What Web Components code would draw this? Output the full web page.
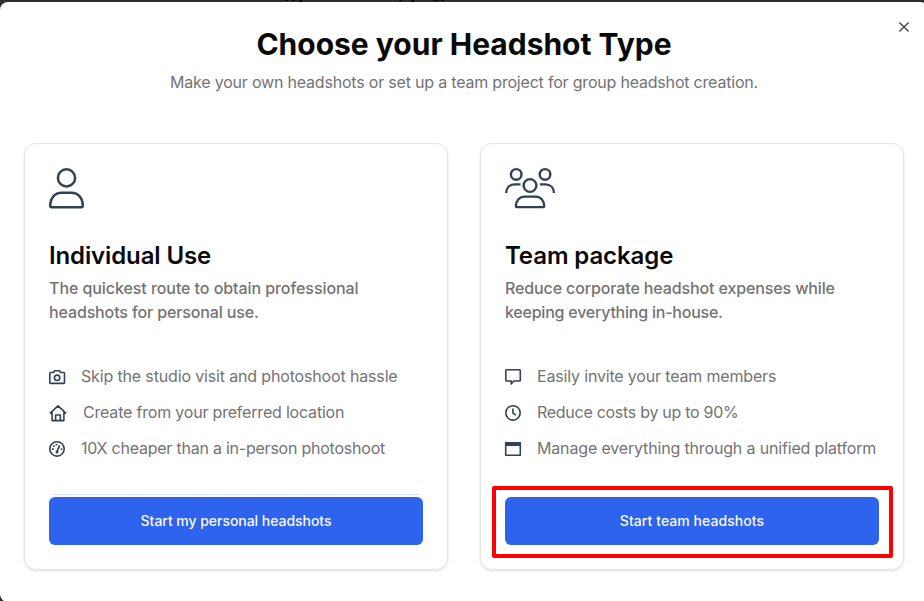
<!DOCTYPE html>
<html lang="en">
<head>
    <meta charset="utf-8">
    <title>Choose your Headshot Type</title>
    <style>
        body {
            margin: 0;
            height: 601px;
            overflow: hidden;
            background: #2f2d2f;
            font-family: Inter, "Liberation Sans", sans-serif;
            font-size: 16px;
            line-height: 24px;
            color: #0a0a0a;
        }
    </style>
</head>
<body>
    <page-backdrop></page-backdrop>
    <type-dialog>
        <span slot="title">Choose your Headshot Type</span>
        <span slot="subtitle">Make your own headshots or set up a team project for group headshot creation.</span>

        <option-card divider>
            <ui-icon slot="icon" name="person"></ui-icon>
            <span slot="heading" style="letter-spacing: -0.12px">Individual Use</span>
            <span slot="text" style="letter-spacing: -0.07px">The quickest route to obtain professional</span>
            <span slot="text" style="letter-spacing: -0.13px">headshots for personal use.</span>
            <feature-row icon="camera" style="letter-spacing: -0.155px">Skip the studio visit and photoshoot hassle</feature-row>
            <feature-row icon="home" style="letter-spacing: -0.195px">Create from your preferred location</feature-row>
            <feature-row icon="gauge" style="letter-spacing: -0.23px">10X cheaper than a in-person photoshoot</feature-row>
            <action-button slot="action" style="letter-spacing: -0.04px">Start my personal headshots</action-button>
        </option-card>

        <option-card>
            <ui-icon slot="icon" name="team"></ui-icon>
            <span slot="heading" style="letter-spacing: -0.1px">Team package</span>
            <span slot="text" style="letter-spacing: -0.125px">Reduce corporate headshot expenses while</span>
            <span slot="text" style="letter-spacing: -0.23px">keeping everything in-house.</span>
            <feature-row icon="message" style="letter-spacing: -0.17px">Easily invite your team members</feature-row>
            <feature-row icon="clock" style="letter-spacing: -0.28px">Reduce costs by up to 90%</feature-row>
            <feature-row icon="window" style="letter-spacing: -0.16px">Manage everything through a unified platform</feature-row>
            <action-button slot="action" highlighted style="letter-spacing: 0.06px">Start team headshots</action-button>
        </option-card>
    </type-dialog>

    <script>
        const ICONS = {
            person: [36, 42, `<g stroke-width="2.5"><circle cx="17.5" cy="9.9" r="8.6"/><path d="M2.2 39.2Q1.2 39.2 1.2 38C1.2 30 6 24.8 12.5 24.8H22.5C29 24.8 33.8 30 33.8 38Q33.8 39.2 32.8 39.2Z"/></g>`],
            team: [50, 42, `<g stroke-width="2.4"><circle cx="11.2" cy="6.4" r="5.3"/><circle cx="40" cy="6.4" r="5.3"/><circle cx="25" cy="17.5" r="6.4"/><path d="M15.5 16.4H10C4.6 16.4 1.2 19.9 1.2 25M35 16.4H40.2C45.6 16.4 48.9 19.9 48.9 25M11.7 39.1H38.4Q39.2 39.1 39.2 38.3C39.2 32.5 35.6 28.6 30.5 28.6H19.8C14.6 28.6 10.9 32.5 10.9 38.3Q10.9 39.1 11.7 39.1Z"/></g>`],
            camera: [16, 16, `<path d="M1.6 3.5H4.6L5.6 1.7H10.6L11.6 3.5H14.8Q15.5 3.5 15.5 4.3V13.6Q15.5 14.4 14.8 14.4H1.6Q.8 14.4 .8 13.6V4.3Q.8 3.5 1.6 3.5Z"/><circle cx="8.1" cy="8.8" r="2.7"/>`],
            home: [18, 18, `<path d="M.9 9.4L9 1.9L17.1 9.4M3.1 8.2V16.6H14.9V8.2M6.6 16.4V11H11.4V16.4"/>`],
            gauge: [16, 16, `<circle cx="8" cy="7.9" r="7.2"/><path d="M8 10.6L10.6 4.2" stroke-width="1.7"/><circle cx="8" cy="11" r="1.5" fill="currentColor" stroke="none"/><path d="M2.9 8.2H4.7M11.8 8.2H13.3M4.3 4.6L5.5 5.7M7.5 2.9V4.6" stroke-width="1.7"/>`],
            message: [16, 18, `<path d="M1.6 1.8H14.6Q15.3 1.8 15.3 2.6V12.2Q15.3 13 14.6 13H8.8L6.2 15.9V13H1.6Q.8 13 .8 12.2V2.6Q.8 1.8 1.6 1.8Z"/>`],
            clock: [16, 16, `<circle cx="8" cy="7.9" r="7.2"/><path d="M7.9 3.6V8.1L10.9 10.1"/>`],
            window: [16, 16, `<path d="M.7 1.7H15.3V14.3H.7Z"/><path d="M0 1H16V5H0Z" fill="currentColor" stroke="none"/>`],
            close: [12, 12, `<path d="M1.4 1.4L10.6 10.6M10.6 1.4L1.4 10.6" stroke-width="1.4"/>`]
        };

        class UiIcon extends HTMLElement {
            connectedCallback() {
                const [width, height, shapes] = ICONS[this.getAttribute('name')];
                this.attachShadow({ mode: 'open' });
                this.shadowRoot.innerHTML = `
                    <style>
                        :host { display: block; flex: none; color: #334155; }
                        svg { display: block; overflow: visible; fill: none; stroke: currentColor; stroke-width: 1.6; stroke-linejoin: round; }
                    </style>
                    <svg width="${width}" height="${height}" viewBox="0 0 ${width} ${height}">${shapes}</svg>
                `;
            }
        }

        // Dimmed strip of the page behind the dialog, with the feet of its headline
        class PageBackdrop extends HTMLElement {
            connectedCallback() {
                this.attachShadow({ mode: 'open' });
                this.shadowRoot.innerHTML = `
                    <style>
                        :host { display: block; height: 2px; }
                        svg { display: block; }
                    </style>
                    <svg width="924" height="2" fill="#0b0a0b">
                        <path d="M285 0h3v1h-3zM292 0h3v1h-3zM299 0h3v2h-3zM399 0h3v1h-3zM411 0h3v2h-3zM433 0h6v1h-6zM441 0h3v1h-3z"/>
                    </svg>
                `;
            }
        }

        class TypeDialog extends HTMLElement {
            connectedCallback() {
                this.attachShadow({ mode: 'open' });
                this.shadowRoot.innerHTML = `
                    <style>
                        :host {
                            display: block;
                            position: relative;
                            box-sizing: border-box;
                            width: 928px;
                            height: 600px;
                            padding: 24px;
                            border-radius: 8px;
                            background: #fff;
                        }
                        header { text-align: center; margin-bottom: 49px; }
                        h1 { margin: 0; font-size: 30px; line-height: 36px; font-weight: 700; }
                        p { margin: 8px 0 0; color: #737373; letter-spacing: -0.2px; }
                        main { display: grid; grid-template-columns: 1fr 1fr; gap: 32px; }
                        button {
                            position: absolute;
                            top: 19px;
                            right: 18px;
                            padding: 0;
                            border: 0;
                            background: none;
                        }
                        button ui-icon { color: #484848; }
                    </style>
                    <header>
                        <h1><slot name="title"></slot></h1>
                        <p><slot name="subtitle"></slot></p>
                    </header>
                    <main><slot></slot></main>
                    <button aria-label="Close"><ui-icon name="close"></ui-icon></button>
                `;
            }
        }

        class OptionCard extends HTMLElement {
            connectedCallback() {
                this.attachShadow({ mode: 'open' });
                this.shadowRoot.innerHTML = `
                    <style>
                        :host {
                            display: flex;
                            flex-direction: column;
                            box-sizing: border-box;
                            height: 427px;
                            padding: 24px;
                            border: 1px solid #e5e5e5;
                            border-radius: 12px;
                            box-shadow: 0 1px 3px rgba(0, 0, 0, 0.1), 0 1px 2px -1px rgba(0, 0, 0, 0.1);
                        }
                        .icon { height: 72px; }
                        h2 { margin: 0 0 4px; font-size: 24px; line-height: 32px; font-weight: 600; }
                        .text { display: flex; flex-direction: column; color: #737373; font-weight: 500; }
                        .features { display: flex; flex-direction: column; gap: 12px; margin-top: 40px; }
                        .divider { flex: none; height: 1px; margin: 34px 4px 2px; }
                        :host([divider]) .divider { background: #d3e1fa; }
                    </style>
                    <div class="icon"><slot name="icon"></slot></div>
                    <h2><slot name="heading"></slot></h2>
                    <div class="text"><slot name="text"></slot></div>
                    <div class="features"><slot></slot></div>
                    <div class="divider"></div>
                    <slot name="action"></slot>
                `;
            }
        }

        class FeatureRow extends HTMLElement {
            connectedCallback() {
                this.attachShadow({ mode: 'open' });
                this.shadowRoot.innerHTML = `
                    <style>
                        :host {
                            display: flex;
                            align-items: center;
                            gap: 16px;
                            height: 24px;
                            color: #737373;
                            white-space: nowrap;
                        }
                        ui-icon { padding-top: 2px; }
                    </style>
                    <ui-icon name="${this.getAttribute('icon')}"></ui-icon>
                    <span><slot></slot></span>
                `;
            }
        }

        class ActionButton extends HTMLElement {
            connectedCallback() {
                this.attachShadow({ mode: 'open' });
                this.shadowRoot.innerHTML = `
                    <style>
                        :host { display: block; position: relative; }
                        button {
                            display: block;
                            width: 100%;
                            height: 48px;
                            padding: 0;
                            border: 0;
                            border-radius: 6px;
                            background: #2d63ed;
                            color: #f8fafc;
                            font: 500 14px/20px Inter, "Liberation Sans", sans-serif;
                            letter-spacing: inherit;
                        }
                        :host([highlighted])::after {
                            content: "";
                            position: absolute;
                            inset: -11px -14px -13px -13px;
                            border: 4px solid #fe0000;
                            border-radius: 2px;
                        }
                    </style>
                    <button><slot></slot></button>
                `;
            }
        }

        customElements.define('ui-icon', UiIcon);
        customElements.define('page-backdrop', PageBackdrop);
        customElements.define('type-dialog', TypeDialog);
        customElements.define('option-card', OptionCard);
        customElements.define('feature-row', FeatureRow);
        customElements.define('action-button', ActionButton);
    </script>
</body>
</html>
